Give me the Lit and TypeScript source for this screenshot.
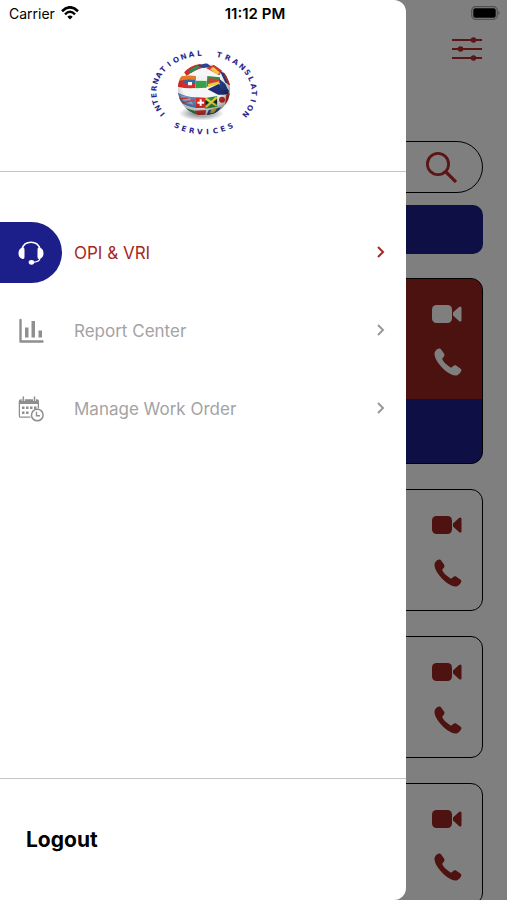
import { LitElement, html, svg, css } from "lit";
import { customElement } from "lit/decorators.js";
import { classMap } from "lit/directives/class-map.js";

const videoIcon = html`<svg class="icon" width="30" height="20" viewBox="0 0 30 20" aria-hidden="true">
  <rect x="0" y="1" width="20" height="18" rx="4.5" fill="currentColor" />
  <path d="M21 8.5L27 3Q29.500 1.500 29.500 4V16Q29.500 18.500 27 17L21 11.500Z" fill="currentColor" />
</svg>`;

const phoneIcon = html`<svg class="icon" width="28" height="28" viewBox="0 0 28 28" aria-hidden="true">
  <path
    d="M1.600 2.800C2.800 1.400 4.200 .6 5.300 .6C6.300 .6 7 1.300 7.700 2.200L10 5.600C10.800 6.900 10.600 8 9.600 9L8.700 10C8.200 10.600 8.300 11.200 8.700 11.900C9.600 13.600 11 15.200 12.600 16.600C13.900 17.800 15.200 18.800 16.500 19.400C17.200 19.700 17.700 19.600 18.200 19.100L19.200 18.100C20.200 17.200 21.300 17.100 22.400 17.800L26 20.200C27.500 21.200 27.700 22.200 27 23.500C26.200 25 25 26.200 23.700 26.900C21.500 28 18.500 27.300 15.500 25.500C12.300 23.700 8.700 20.600 6 17.300C3.300 14 1.100 10.400 .6 7.300C.3 5.300 .6 3.900 1.600 2.800Z"
    fill="currentColor"
  />
</svg>`;

const headsetIcon = html`<svg width="26" height="24" viewBox="0 0 26 24" aria-hidden="true">
  <path d="M4 8C5.200 3.500 8.600 1.200 13 1.200S20.800 3.500 22 8" fill="none" stroke="currentColor" stroke-width="1.600" />
  <path
    d="M4 6.800Q6.500 6 6.500 8.500V16Q6.500 18.500 4 17.700Q.5 16.500 .5 12.200T4 6.800ZM22 6.800Q19.500 6 19.500 8.500V16Q19.500 18.500 22 17.700Q25.500 16.500 25.500 12.200T22 6.800Z"
    fill="currentColor"
  />
  <path d="M22 17.500Q21.500 21 14 21.400" fill="none" stroke="currentColor" stroke-width="1.400" />
  <ellipse cx="13.500" cy="21.300" rx="2.800" ry="2.400" fill="currentColor" />
</svg>`;

const chartIcon = html`<svg width="26" height="26" viewBox="0 0 26 26" aria-hidden="true">
  <path d="M2.500 2V23.500H24.500" fill="none" stroke="currentColor" stroke-width="2.400" stroke-linecap="round" stroke-linejoin="round" />
  <path d="M7 9.500H10.500V19.500H7ZM13.500 3H17V19.500H13.500ZM20.500 12.500H24V19.500H20.500Z" fill="currentColor" />
</svg>`;

const calendarIcon = html`<svg width="26" height="26" viewBox="0 0 26 26" aria-hidden="true">
  <path d="M1.400 7V20Q1.400 21.200 2.600 21.200H12.500M20.400 7V12.500" fill="none" stroke="currentColor" stroke-width="1.300" />
  <path d="M.8 8V5.200Q.8 3.200 2.800 3.200H19Q21 3.200 21 5.200V8Z" fill="currentColor" />
  <path d="M5.300 1V5M16.500 1V5" stroke="#fff" stroke-width="3" />
  <path d="M5.300 1V5M16.500 1V5" stroke="currentColor" stroke-width="1.500" stroke-linecap="round" />
  <path
    d="M4 10.500H6.500V13H4ZM8 10.500H10.500V13H8ZM12 10.500H14.500V13H12ZM16 10.500H18.500V13H16ZM4 15.500H6.500V18H4ZM8 15.500H10.500V18H8Z"
    fill="currentColor"
  />
  <circle cx="19.300" cy="19" r="5.800" fill="#fff" stroke="currentColor" stroke-width="1.500" />
  <path d="M18.500 15.800V19.700H22" fill="none" stroke="currentColor" stroke-width="1.400" />
</svg>`;

const chevronIcon = html`<svg class="chevron" width="10" height="14" viewBox="0 0 10 14" aria-hidden="true">
  <path d="M2 1L7 6L2 11" fill="none" stroke="currentColor" stroke-width="2" />
</svg>`;

const filterIcon = html`<svg width="32" height="26" viewBox="0 0 32 26" aria-hidden="true">
  <path d="M1 4H31M1 13H31M1 22H31" stroke="currentColor" stroke-width="1.800" />
  <circle cx="22.500" cy="4" r="2.800" fill="currentColor" />
  <circle cx="9.500" cy="13" r="2.800" fill="currentColor" />
  <circle cx="22.500" cy="22" r="2.800" fill="currentColor" />
</svg>`;

const searchIcon = html`<svg width="32" height="32" viewBox="0 0 32 32" aria-hidden="true">
  <circle cx="13" cy="13" r="10.600" fill="none" stroke="currentColor" stroke-width="2.800" />
  <path d="M20.500 20.500L31 31" stroke="currentColor" stroke-width="3.200" />
</svg>`;

const wifiIcon = html`<svg width="18" height="14" viewBox="0 0 18 14" aria-hidden="true">
  <path d="M1 5.200Q9 -2.600 17 5.200" fill="none" stroke="currentColor" stroke-width="2.600" />
  <path d="M4 8.300Q9 3.400 14 8.300" fill="none" stroke="currentColor" stroke-width="2.400" />
  <path d="M6.300 10.700Q9 8.200 11.700 10.700L9 13.500Z" fill="currentColor" />
</svg>`;

const batteryIcon = html`<svg width="30" height="14" viewBox="0 0 30 14" aria-hidden="true">
  <rect x=".7" y=".7" width="25.600" height="12.600" rx="3.800" fill="none" stroke="#505050" stroke-width="1.200" />
  <rect x="2.300" y="2.300" width="22.400" height="9.400" rx="2" fill="#000" />
  <path d="M27.500 4.800Q30 7 27.500 9.200Z" fill="#505050" />
</svg>`;

/** Sets a word along the logo's ellipse; angles run clockwise from the top. */
function ringText(word: string, from: number, to: number, below = false) {
  const cx = 192;
  const cy = 157;
  const shift = below ? 8 : -8;
  const rx = 151 + shift;
  const ry = 118 + shift;
  const xs: string[] = [];
  const ys: string[] = [];
  const turns: string[] = [];
  [...word].forEach((letter, i) => {
    const t = ((from + ((to - from) * i) / (word.length - 1)) * Math.PI) / 180;
    const dir = below ? -1 : 1;
    const turn = Math.atan2(dir * ry * Math.sin(t), dir * rx * Math.cos(t));
    const half = letter === "I" ? 4 : 8;
    xs.push((cx + rx * Math.sin(t) - half * Math.cos(turn)).toFixed(1));
    ys.push((cy - ry * Math.cos(t) - half * Math.sin(turn)).toFixed(1));
    turns.push(((turn * 180) / Math.PI).toFixed(1));
  });
  return svg`<text class="ring" x=${xs.join(" ")} y=${ys.join(" ")} rotate=${turns.join(" ")}>${word}</text>`;
}

@customElement("company-logo")
export class CompanyLogo extends LitElement {
  static styles = css`
    :host {
      display: block;
    }
    svg {
      display: block;
    }
    .ring {
      font: bold 22px "DejaVu Sans", sans-serif;
      fill: #2b2a8c;
    }
  `;

  render() {
    return html`<svg width="125" height="105" viewBox="0 0 375 315" role="img" aria-label="International Translation Services">
      <defs>
        <clipPath id="ball"><circle cx="192" cy="148" r="79" /></clipPath>
        <radialGradient id="shade" cx=".45" cy=".38" r=".62">
          <stop offset=".6" stop-color="#000" stop-opacity="0" />
          <stop offset="1" stop-color="#000" stop-opacity=".4" />
        </radialGradient>
        <radialGradient id="ground">
          <stop offset=".3" stop-color="#6d7780" stop-opacity=".8" />
          <stop offset="1" stop-color="#6d7780" stop-opacity="0" />
        </radialGradient>
      </defs>
      <ellipse cx="184" cy="220" rx="68" ry="22" fill="url(#ground)" />
      <g clip-path="url(#ball)">
        <rect x="110" y="65" width="165" height="165" fill="#f6f6f8" />
        <path d="M132 96Q150 76 180 72L196 82Q165 88 140 108Z" fill="#c9302c" />
        <path d="M146 92L172 76L180 82L152 100Z" fill="#2e8b57" />
        <path d="M172 76L200 70L216 80L190 84Z" fill="#28468f" />
        <path d="M198 84L222 74L246 92L238 106Z" fill="#d9342b" />
        <path d="M210 88L220 80L240 98L232 104Z" fill="#f1c644" />
        <path d="M240 94L254 100L270 134L256 128Z" fill="#263e8a" />
        <path d="M250 100L258 106L272 136L264 134Z" fill="#c9302c" />
        <path d="M112 112Q140 104 168 108V120Q140 118 112 126Z" fill="#e57a25" />
        <path d="M112 124Q140 116 166 120V144Q138 146 113 140Z" fill="#cf2f28" />
        <path d="M133 120L166 119V131L133 132Z" fill="#3566a8" />
        <path d="M144 126H156V136H144Z" fill="#fff" />
        <path d="M166 122L200 122V143L166 145Z" fill="#38a04b" />
        <path d="M172 107L204 108L202 122L168 120Z" fill="#f2f2f2" />
        <path d="M202 108L240 112V128L200 140Z" fill="#27934a" />
        <path d="M206 114L238 118V126L206 130Z" fill="#d73a2e" />
        <path d="M204 132L238 124L238 132L204 142Z" fill="#efc83e" />
        <path d="M203 148L236 132L266 150L266 164L234 164Z" fill="#1d2f72" />
        <path d="M238 116L256 132L266 154L240 144Z" fill="#233b82" />
        <path d="M112 158Q138 170 168 172L168 204Q136 200 120 184Z" fill="#587fb5" />
        <path d="M118 164L148 172L160 194L134 188Z" fill="#8eabd2" />
        <path d="M118 176L146 174M128 188L164 180" stroke="#c93d3d" stroke-width="4" />
        <path d="M168 172L196 173V203L168 204Z" fill="#d52b27" />
        <path d="M182 178V198M172 188H192" stroke="#fff" stroke-width="6" />
        <path d="M196 174L232 168V200L196 206Z" fill="#278c43" />
        <path d="M198 176L230 198M198 202L230 172" stroke="#f0d038" stroke-width="6" />
        <path d="M206 188L196 180V196ZM220 186L232 178V192Z" fill="#1b1b1b" />
        <path d="M232 167L266 163L260 192L232 198Z" fill="#fff" />
        <circle cx="246" cy="179" r="9" fill="#d52b27" />
        <path d="M258 164L272 160L266 186L256 194Z" fill="#c3322b" />
        <path d="M134 204L164 212L168 224L150 222Z" fill="#3a9150" />
        <path d="M164 212L198 210L196 224L168 226Z" fill="#d33a2f" />
        <path d="M206 210L244 202L228 220L200 226Z" fill="#2a5a9c" />
        <path d="M214 207L232 204L222 218L210 220Z" fill="#f0c63f" />
        <circle cx="192" cy="148" r="79" fill="url(#shade)" />
      </g>
      ${ringText("INTERNATIONAL", -124, -5)} ${ringText("TRANSLATION", 18, 123)} ${ringText("SERVICES", 212, 149, true)}
    </svg>`;
  }
}

@customElement("contact-card")
export class ContactCard extends LitElement {
  static properties = { featured: { type: Boolean, reflect: true } };
  declare featured: boolean;

  static styles = css`
    :host {
      display: block;
      box-sizing: border-box;
      border: 1px solid #000;
      border-radius: 12px;
      overflow: hidden;
      color: #9c2521;
    }
    :host([featured]) {
      background: #1c1e8a;
      color: #fff;
    }
    .calls {
      display: flex;
      flex-direction: column;
      align-items: flex-end;
      gap: 24px;
      box-sizing: border-box;
      height: 120px;
      padding: 25px 20px 0;
    }
    :host([featured]) .calls {
      background: #96241f;
    }
    .note {
      height: 64px;
    }
    button {
      display: flex;
      padding: 0;
      border: 0;
      background: none;
      color: inherit;
    }
    .icon {
      display: block;
    }
  `;

  render() {
    return html`<div class="calls">
        <button aria-label="Video call">${videoIcon}</button>
        <button aria-label="Phone call">${phoneIcon}</button>
      </div>
      ${this.featured ? html`<div class="note"></div>` : ""}`;
  }
}

const menu = [
  { label: "OPI & VRI", icon: headsetIcon, active: true },
  { label: "Report Center", icon: chartIcon, active: false },
  { label: "Manage Work Order", icon: calendarIcon, active: false },
];

@customElement("app-root")
export class AppRoot extends LitElement {
  static styles = css`
    :host {
      display: block;
      position: relative;
      height: 100vh;
      overflow: hidden;
      background: #fff;
      color: #000;
      font-family: Inter, "Liberation Sans", sans-serif;
    }
    svg {
      display: block;
      flex: none;
    }
    button {
      padding: 0;
      border: 0;
      background: none;
      color: inherit;
      font: inherit;
    }
    .status {
      position: absolute;
      z-index: 3;
      inset: 0 0 auto 0;
      display: grid;
      grid-template-columns: 1fr auto 1fr;
      align-items: center;
      height: 26px;
      padding: 0 6px 0 9px;
      font-size: 14px;
    }
    .carrier {
      display: flex;
      align-items: center;
      gap: 6px;
    }
    .time {
      font-size: 15px;
      font-weight: 600;
    }
    .battery {
      justify-self: end;
    }
    .page {
      display: flex;
      flex-direction: column;
      padding: 36px 24px 24px;
    }
    .filter {
      align-self: flex-end;
      color: #b32d28;
    }
    .search {
      display: flex;
      align-items: center;
      box-sizing: border-box;
      height: 52px;
      margin-top: 79px;
      padding: 0 25px;
      border: 1px solid #000;
      border-radius: 26px;
      color: #b32d28;
    }
    .search input {
      flex: 1;
      min-width: 0;
      border: 0;
      outline: 0;
      background: none;
      font: inherit;
    }
    .banner {
      height: 49px;
      margin-top: 12px;
      border-radius: 10px;
      background: #1c1e8a;
    }
    .cards {
      display: flex;
      flex-direction: column;
      gap: 25px;
      margin-top: 24px;
    }
    .scrim {
      position: absolute;
      z-index: 1;
      inset: 0;
      background: rgba(0, 0, 0, 0.5);
    }
    .drawer {
      position: absolute;
      z-index: 2;
      inset: 0 auto 0 0;
      display: flex;
      flex-direction: column;
      width: 80%;
      border-radius: 0 12px 12px 0;
      background: #fff;
    }
    .brand {
      display: flex;
      justify-content: center;
      padding: 40px 0 26px;
      border-bottom: 1px solid #c4c4c4;
    }
    .menu {
      flex: 1;
      display: flex;
      flex-direction: column;
      gap: 17px;
      margin: 0;
      padding: 50px 0 0;
      list-style: none;
    }
    .item {
      display: flex;
      align-items: center;
      gap: 12px;
      padding-right: 20px;
      color: #a3a3a3;
      font-size: 17px;
      text-decoration: none;
    }
    .badge {
      display: grid;
      place-items: center;
      width: 62px;
      height: 61px;
      border-radius: 0 31px 31px 0;
      color: #8f8f8f;
    }
    .label {
      flex: 1;
    }
    .chevron {
      color: #999;
    }
    .active,
    .active .chevron {
      color: #a52822;
    }
    .active .badge {
      background: #1c1e8a;
      color: #fff;
    }
    .foot {
      display: flex;
      align-items: center;
      height: 121px;
      padding: 0 26px;
      border-top: 1px solid #c4c4c4;
    }
    .logout {
      font-size: 21px;
      font-weight: 700;
    }
  `;

  render() {
    return html`
      <header class="status">
        <span class="carrier">Carrier ${wifiIcon}</span>
        <span class="time">11:12 PM</span>
        <span class="battery">${batteryIcon}</span>
      </header>
      <main class="page">
        <button class="filter" aria-label="Filters">${filterIcon}</button>
        <label class="search"><input type="search" aria-label="Search" />${searchIcon}</label>
        <div class="banner"></div>
        <div class="cards">
          <contact-card featured></contact-card>
          <contact-card></contact-card>
          <contact-card></contact-card>
          <contact-card></contact-card>
        </div>
      </main>
      <div class="scrim"></div>
      <nav class="drawer" aria-label="Main menu">
        <div class="brand"><company-logo></company-logo></div>
        <ul class="menu">
          ${menu.map(
            ({ label, icon, active }) => html`<li>
              <a class=${classMap({ item: true, active })} href="#">
                <span class="badge">${icon}</span>
                <span class="label">${label}</span>
                ${chevronIcon}
              </a>
            </li>`
          )}
        </ul>
        <div class="foot"><button class="logout">Logout</button></div>
      </nav>
    `;
  }
}
